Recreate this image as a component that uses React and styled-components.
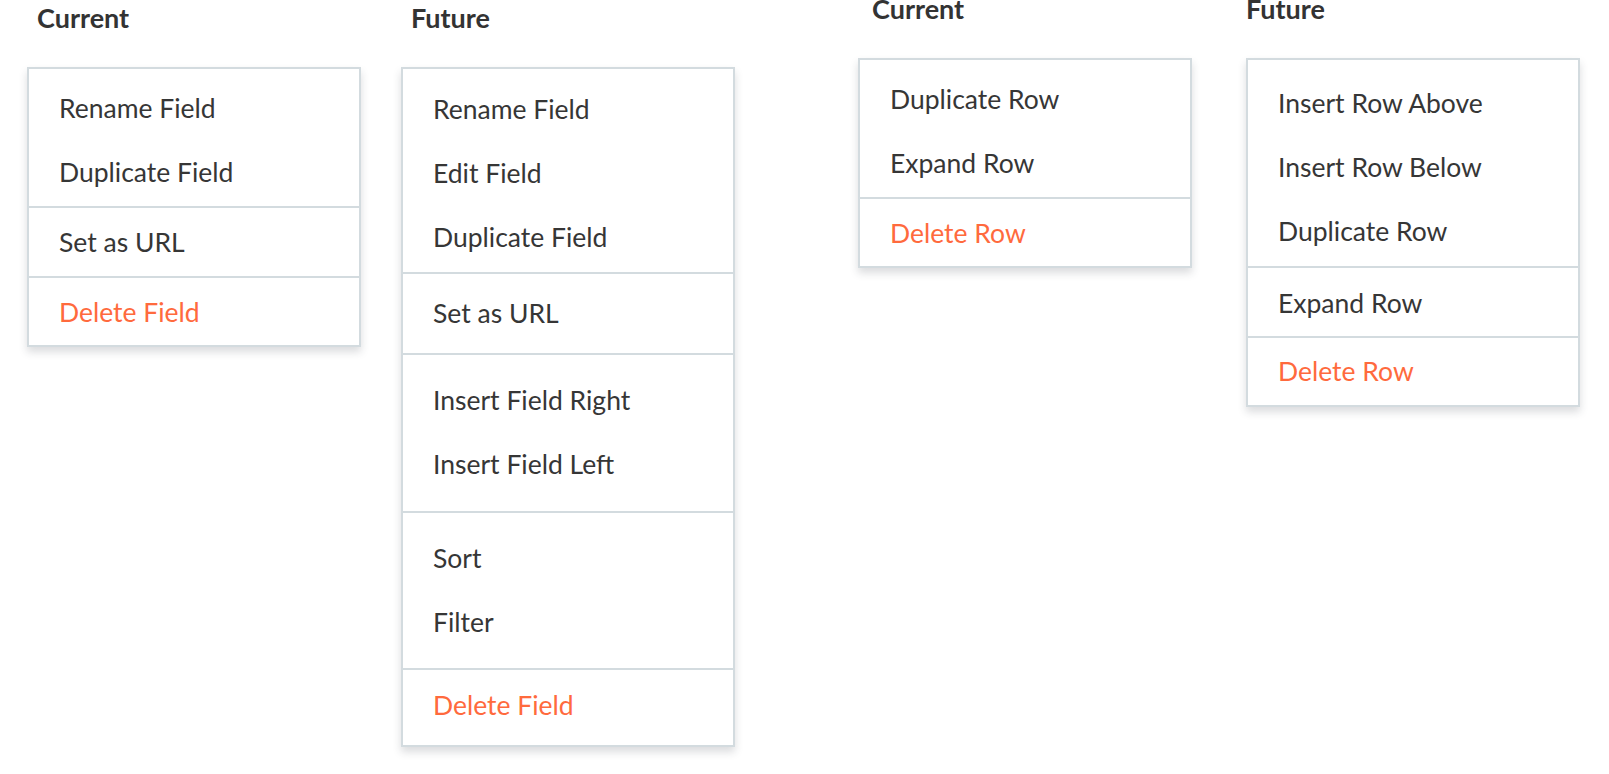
import styled, { createGlobalStyle } from "styled-components";

const GlobalStyle = createGlobalStyle`
  html, body {
    margin: 0;
    padding: 0;
    background: #ffffff;
  }
  body {
    font-family: Lato, "Noto Sans", "Liberation Sans", sans-serif;
    color: #363636;
  }
`;

const Page = styled.div`
  display: flex;
  align-items: flex-start;
  width: 1609px;
  height: 774px;
  overflow: hidden;
`;

const Column = styled.section`
  display: flex;
  flex-direction: column;
  width: 334px;
  margin-left: ${(p) => p.$offset}px;
  margin-top: ${(p) => -(p.$lift || 0)}px;
`;

const Title = styled.h2`
  margin: 0 0 31px;
  padding-left: ${(p) => p.$indent}px;
  height: 36px;
  font-size: 27px;
  line-height: 36px;
  font-weight: 700;
  color: #333333;
`;

const Menu = styled.div`
  background: #ffffff;
  border: 2px solid #d3dbdf;
  box-shadow: 0 5px 8px rgba(40, 50, 60, 0.17);
`;

const Group = styled.div`
  padding: ${(p) => p.$top}px 0 ${(p) => p.$bottom}px;
  & + & {
    border-top: 2px solid #d3dbdf;
  }
`;

const Item = styled.div`
  height: 64px;
  padding-left: 30px;
  font-size: 26.5px;
  line-height: 64px;
  white-space: nowrap;
  color: ${(p) => (p.$danger ? "#ff6a3d" : "#363636")};
`;

const columns = [
  {
    title: "Current",
    offset: 27,
    indent: 10,
    lift: 0,
    groups: [
      { top: 7, bottom: 2, items: ["Rename Field", "Duplicate Field"] },
      { top: 2, bottom: 2, items: ["Set as URL"] },
      { top: 2, bottom: 1, items: ["Delete Field"], danger: true },
    ],
  },
  {
    title: "Future",
    offset: 40,
    indent: 10,
    lift: 0,
    groups: [
      { top: 8, bottom: 3, items: ["Rename Field", "Edit Field", "Duplicate Field"] },
      { top: 7, bottom: 8, items: ["Set as URL"] },
      { top: 13, bottom: 15, items: ["Insert Field Right", "Insert Field Left"] },
      { top: 13, bottom: 14, items: ["Sort", "Filter"] },
      { top: 3, bottom: 8, items: ["Delete Field"], danger: true },
    ],
  },
  {
    title: "Current",
    offset: 123,
    indent: 14,
    lift: 9,
    groups: [
      { top: 7, bottom: 2, items: ["Duplicate Row", "Expand Row"] },
      { top: 2, bottom: 1, items: ["Delete Row"], danger: true },
    ],
  },
  {
    title: "Future",
    offset: 54,
    indent: 0,
    lift: 9,
    groups: [
      { top: 11, bottom: 3, items: ["Insert Row Above", "Insert Row Below", "Duplicate Row"] },
      { top: 3, bottom: 1, items: ["Expand Row"] },
      { top: 1, bottom: 2, items: ["Delete Row"], danger: true },
    ],
  },
];

const App = () => {
  return (
    <>
      <GlobalStyle />
      <Page>
        {columns.map((col, i) => (
          <Column key={i} $offset={col.offset} $lift={col.lift}>
            <Title $indent={col.indent}>{col.title}</Title>
            <Menu>
              {col.groups.map((g, j) => (
                <Group key={j} $top={g.top} $bottom={g.bottom}>
                  {g.items.map((label) => (
                    <Item key={label} $danger={g.danger}>
                      {label}
                    </Item>
                  ))}
                </Group>
              ))}
            </Menu>
          </Column>
        ))}
      </Page>
    </>
  );
};

export default App;
